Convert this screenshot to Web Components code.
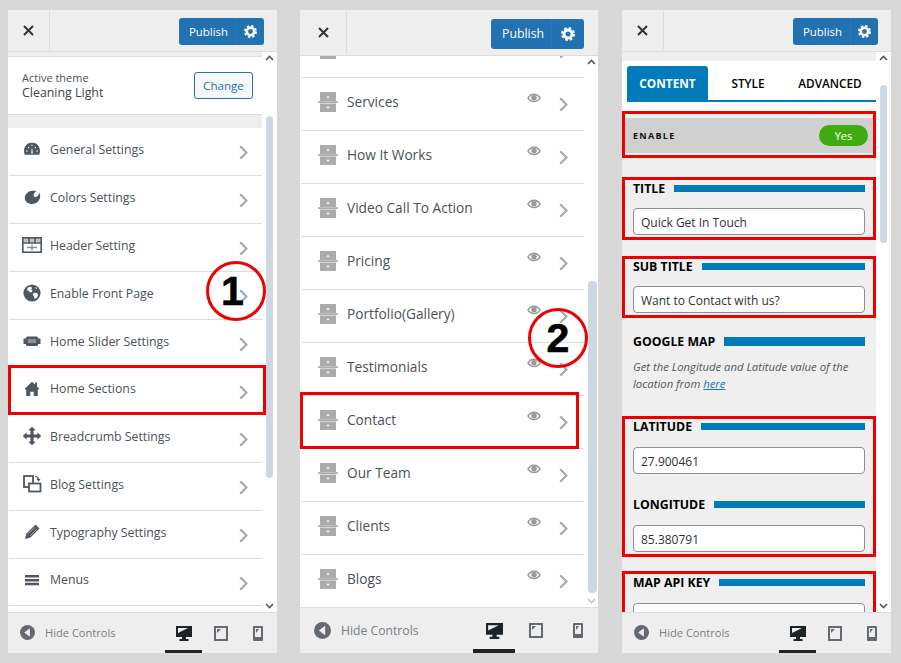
<!DOCTYPE html>
<html lang="en">
<head>
<meta charset="utf-8">
<title>Customizer steps</title>
<style>
    html, body { margin: 0; background: #d8d8d8; }
    body {
        width: 901px;
        height: 663px;
        box-sizing: border-box;
        padding: 10px 0 10px 8px;
        display: flex;
        gap: 23px;
        font-family: "Open Sans", "Noto Sans", sans-serif;
        overflow: hidden;
    }
    .form-top { height: 9px; background: #eeeeee; }
</style>
</head>
<body>
<cz-panel id="one">
    <cz-theme></cz-theme>
    <cz-row icon="gauge">General Settings</cz-row>
    <cz-row icon="palette">Colors Settings</cz-row>
    <cz-row icon="header">Header Setting</cz-row>
    <cz-row icon="globe">Enable Front Page</cz-row>
    <cz-row icon="slider">Home Slider Settings</cz-row>
    <cz-row icon="home" mark style="--row-h:47px;--mark:-3px -4px -1px -1px">Home Sections</cz-row>
    <cz-row icon="move">Breadcrumb Settings</cz-row>
    <cz-row icon="blog">Blog Settings</cz-row>
    <cz-row icon="pencil">Typography Settings</cz-row>
    <cz-row icon="menu" style="--row-h:47px">Menus</cz-row>
    <cz-callout slot="over" style="left:198px;top:251px;padding-right:7px">1</cz-callout>
</cz-panel>

<cz-panel id="two">
    <cz-row icon="section" eye style="margin-top:-31px"></cz-row>
    <cz-row icon="section" eye>Services</cz-row>
    <cz-row icon="section" eye>How It Works</cz-row>
    <cz-row icon="section" eye>Video Call To Action</cz-row>
    <cz-row icon="section" eye>Pricing</cz-row>
    <cz-row icon="section" eye>Portfolio(Gallery)</cz-row>
    <cz-row icon="section" eye>Testimonials</cz-row>
    <cz-row icon="section" eye mark style="--mark:-4px 5px -1px -1px">Contact</cz-row>
    <cz-row icon="section" eye>Our Team</cz-row>
    <cz-row icon="section" eye>Clients</cz-row>
    <cz-row icon="section" eye>Blogs</cz-row>
    <cz-callout slot="over" style="left:228px;top:298px">2</cz-callout>
</cz-panel>

<cz-panel id="three">
    <div class="form-top"></div>
    <cz-tabs></cz-tabs>
    <cz-form>
        <cz-box style="margin-top:9px"><cz-enable></cz-enable></cz-box>
        <cz-box style="margin-top:19px;--box-top:1px"><cz-field label="TITLE" value="Quick Get In Touch"></cz-field></cz-box>
        <cz-box style="margin-top:16px"><cz-field label="SUB TITLE" value="Want to Contact with us?"></cz-field></cz-box>
        <cz-note label="GOOGLE MAP">Get the Longitude and Latitude value of the<br>location from <a href="#">here</a></cz-note>
        <cz-box style="--gap:13px">
            <cz-field label="LATITUDE" value="27.900461"></cz-field>
            <cz-field label="LONGITUDE" value="85.380791" style="margin-top:23px"></cz-field>
        </cz-box>
        <cz-box style="margin-top:14px;--gap:13px;--box-top:1px"><cz-field label="MAP API KEY" value=""></cz-field></cz-box>
    </cz-form>
</cz-panel>

<script>
const ICONS = {
    gauge: '<path fill="#50575e" fill-rule="evenodd" d="M10 3.500C5.300 3.500 2 7.200 2 12c0 1.300.3 2.500.8 3.800h14.400c.5-1.300.8-2.500.8-3.800 0-4.800-3.300-8.500-8-8.500zM6 8h1.200v1.200H6zM9.400 5.800h1.200V7H9.400zM12.800 8H14v1.200h-1.200zM4.300 11.500h1.200v1.200H4.300zM14.500 11.500h1.200v1.200h-1.200zM9.200 14.500l.5-5h.6l.5 5z"/>',
    palette: '<path fill="#50575e" d="M14.500 4.200c-1.500 1-2.900 2.400-2.900 3.700 0 1.300 1 2.200 2.300 2 1.500-.2 2.900-1.900 3.500-4.200.6 1.200.9 2.500.8 3.600-.2 4.400-3.500 7.700-8 7.700-4 0-7.400-2.300-7.400-6 0-3.800 3.800-7.200 7.800-7.200 1.400 0 2.800.1 3.900.4z"/>',
    header: '<g fill="none" stroke="#50575e"><rect x=".8" y="2.800" width="18.400" height="14.400" stroke-width="1.600"/><path stroke-width="1.600" d="M1 8h18M7 3v5M13 3v5"/><path stroke="#8c8f94" stroke-width="1.300" d="M5 12.500h10M10 9.500v6"/></g><path fill="#50575e" d="M1 3h18v4.500H1z" opacity=".35"/>',
    globe: '<circle cx="10" cy="10" r="8.600" fill="#50575e"/><path fill="#fff" d="M5.600 4.800 8.500 3.600l1.600 1.300-1 1.700 1.400 1-.7 1.600-2 .1-1.100-1.500-1.700-.4zM11.800 9.800l3 .2 1.500 2-1.700 3-2 .9-.6-2.600-1.300-1.500zM13 3.800l2.200 1.500-1.200.8z"/>',
    slider: '<rect x="1.500" y="7.500" width="3" height="5.500" rx=".6" fill="#50575e"/><rect x="15.500" y="7.500" width="3" height="5.500" rx=".6" fill="#50575e"/><rect x="4" y="5.500" width="12" height="9.500" rx="1.500" fill="#50575e"/><rect x="6" y="8" width="8" height="4" fill="#8c8f94"/>',
    home: '<path fill="#50575e" d="M10 2.800 3 9.400v1h1.200v6.600h4.100v-4.200h3.400v4.200h4.100v-6.600H17v-1l-2-1.900V3.600h-2v1.900z"/>',
    move: '<path fill="#50575e" d="M10 .8 13.800 4.600H11.600V8.400H15.400V6.200L19.200 10 15.400 13.800V11.600H11.600V15.400H13.800L10 19.200 6.200 15.400H8.400V11.600H4.600V13.800L.8 10 4.600 6.200V8.400H8.400V4.600H6.200z"/>',
    blog: '<g fill="none" stroke="#50575e" stroke-width="1.800"><rect x="2" y="2" width="9" height="11"/><rect x="7" y="9.500" width="11.500" height="8" fill="#fff"/></g><path fill="none" stroke="#50575e" stroke-width="1.200" d="M13 2.500c2 0 3.500 1 3.500 3.500M15 4.800l1.500 1.800L18 4.800"/>',
    pencil: '<path fill="#50575e" d="M13.500 2.500 17.500 6.500 8.500 15.500 3 17 4.500 11.500z"/><path stroke="#c8cacc" stroke-width=".6" d="M6.200 11.800 12.800 5.200M8.200 13.800 14.800 7.200"/>',
    menu: '<path fill="#50575e" d="M3 5h14v2.500H3zM3 8.900h14v2.500H3zM3 12.800h14v2.500H3z"/>',
    section: '<path fill="#ababab" d="M2 0h16v8.900H2zM0 9.300h20v1.700H0zM2 11.400h16V20H2z"/><path fill="#fff" d="M10 3.800 11.700 5.800H8.300zM10 16.800 8.300 14.800h3.400z"/>'
};
const EYE = '<svg width="14" height="14" viewBox="0 0 20 20"><path fill="#9a9a9a" d="M10 3.500C5.500 3.500 2 6.500.2 10c1.800 3.500 5.300 6 9.800 6s8-2.500 9.800-6C18 6.500 14.500 3.500 10 3.500z"/><path fill="#fff" d="M10 6C6.800 6 4 7.800 2.600 10 4 12.300 6.800 14 10 14s6-1.700 7.400-4C16 7.800 13.200 6 10 6z"/><circle cx="10" cy="9.500" r="3.900" fill="#9a9a9a"/></svg>';
const CHEVRON = '<svg width="9" height="15" viewBox="0 0 9 15"><path d="M1.200 1.200 7.400 7.500 1.200 13.800" fill="none" stroke="#a7aaad" stroke-width="2.200"/></svg>';

class CzPanel extends HTMLElement {
    constructor() {
        super();
        this.attachShadow({ mode: 'open' });
    }

    connectedCallback() {
        const big = this.id === 'two';
        const track = { one: [64, 362, 7], two: [225, 312, 9], three: [33, 158, 7] }[this.id];
        this.shadowRoot.innerHTML = `
            <style>
                :host {
                    display: flex;
                    flex-direction: column;
                    position: relative;
                    flex: none;
                    height: 643px;
                    width: ${big ? 298 : 269}px;
                    margin-left: ${this.id === 'three' ? 1 : 0}px;
                    background: #fff;
                    color: #4a5158;
                    --row-h: ${big ? 53 : 48}px;
                    --row-font: ${big ? 13.7 : 12.3}px;
                    --row-pad: ${big ? 17 : 13}px;
                    --row-gap: ${big ? 9 : 8}px;
                    --row-right: ${big ? 16 : 14}px;
                    --chev: ${big ? 5 : 7}px;
                }
                .head {
                    flex: none;
                    height: ${big ? 45 : 41}px;
                    display: flex;
                    background: #eeeeee;
                    border-bottom: 1px solid #dcdcde;
                }
                .close {
                    width: ${big ? 46 : 41}px;
                    margin: 1px 0;
                    border-right: 1px solid #dcdcde;
                    display: flex;
                    align-items: center;
                    justify-content: center;
                }
                .publish {
                    margin: ${big ? 9 : 8}px ${big ? 14 : 13}px 0 auto;
                    height: ${big ? 30 : 27}px;
                    display: flex;
                    background: #2271b1;
                    border-radius: 3px;
                    color: #fff;
                    font-size: ${big ? 12.3 : 11.4}px;
                }
                .publish span {
                    width: ${big ? 61 : 58}px;
                    box-sizing: border-box;
                    padding-left: ${big ? 11 : 10}px;
                    line-height: ${big ? 30 : 27}px;
                    border-right: 1px solid #2a78b8;
                }
                .publish i {
                    width: ${big ? 32 : 27}px;
                    display: flex;
                    align-items: center;
                    justify-content: center;
                }
                .main {
                    flex: 1;
                    min-height: 0;
                    display: flex;
                    overflow: hidden;
                }
                .content {
                    flex: 1;
                    min-width: 0;
                    position: relative;
                    z-index: 1;
                }
                .track {
                    flex: none;
                    width: ${big ? 14 : 15}px;
                    position: relative;
                    box-sizing: border-box;
                    padding: ${track[0]}px 0 0 4px;
                }
                .thumb {
                    width: ${track[2]}px;
                    height: ${track[1]}px;
                    background: #cdd8e3;
                    border-radius: 4px;
                }
                .track svg { position: absolute; left: 3px; }
                .up { top: 3px; }
                .down { bottom: 3px; }
                .foot {
                    flex: none;
                    height: ${big ? 45 : 40}px;
                    display: flex;
                    align-items: center;
                    background: #eeeeee;
                    border-top: 1px solid #dcdcde;
                    font-size: ${big ? 12.2 : 11.1}px;
                    color: #787c82;
                }
                .hide { display: flex; align-items: center; gap: ${big ? 10 : 10}px; padding: 0 0 ${big ? 0 : 1}px ${big ? 14 : 12}px; }
                .devices {
                    margin: 0 ${big ? -1 : 1}px 0 auto;
                    height: 100%;
                    display: flex;
                }
                .devices div {
                    width: ${big ? 42 : 37}px;
                    display: flex;
                    align-items: center;
                    justify-content: center;
                }
                .devices .on { box-shadow: inset 0 -${big ? 4 : 3}px #1d2327; }
            </style>
            <div class="head">
                <div class="close">
                    <svg width="11" height="11" viewBox="0 0 11 11"><path d="M1 1l9 9M10 1l-9 9" stroke="#2c3338" stroke-width="2" fill="none"/></svg>
                </div>
                <div class="publish">
                    <span>Publish</span>
                    <i><svg width="${big ? 14 : 13}" height="${big ? 14 : 13}" viewBox="0 0 14 14"><circle cx="7" cy="7" r="4" fill="none" stroke="#fff" stroke-width="2.800"/><circle cx="7" cy="7" r="6" fill="none" stroke="#fff" stroke-width="2" stroke-dasharray="2.600 2.112"/></svg></i>
                </div>
            </div>
            <div class="main">
                <div class="content"><slot></slot></div>
                <div class="track">
                    <svg class="up" width="9" height="6" viewBox="0 0 9 6"><path d="M1 5 4.500 1.500 8 5" fill="none" stroke="#50575e" stroke-width="1.600"/></svg>
                    <div class="thumb"></div>
                    <svg class="down" width="9" height="6" viewBox="0 0 9 6"><path d="M1 1 4.500 4.500 8 1" fill="none" stroke="${big ? '#c3c4c7' : '#50575e'}" stroke-width="1.600"/></svg>
                </div>
            </div>
            <div class="foot">
                <div class="hide">
                    <svg width="${big ? 17 : 15}" height="${big ? 17 : 15}" viewBox="0 0 16 16"><circle cx="8" cy="8" r="8" fill="#646970"/><path d="M10.500 3.500v9L4.500 8z" fill="#eee"/></svg>
                    <span>Hide Controls</span>
                </div>
                <div class="devices">
                    <div class="on"><svg width="${big ? 17 : 16}" height="${big ? 16 : 15}" viewBox="0 0 16 15"><path fill="#1d2327" d="M0 0h16v11h-6v2h2.500v2h-9v-2H6v-2H0z"/><path fill="#eee" d="M2 2h10L2 7z"/></svg></div>
                    <div><svg width="14" height="15" viewBox="0 0 14 15"><rect x="1" y="1" width="12" height="13" fill="none" stroke="#646970" stroke-width="2"/><path fill="#646970" d="M3 3h4L3 7z"/></svg></div>
                    <div><svg width="10" height="15" viewBox="0 0 10 15"><rect width="10" height="15" rx="1" fill="#646970"/><path fill="#eee" d="M2 2h6v9H2z"/><path fill="#646970" d="M3 3h3L3 7z"/></svg></div>
                </div>
            </div>
            <slot name="over"></slot>
        `;
    }
}

class CzTheme extends HTMLElement {
    constructor() {
        super();
        this.attachShadow({ mode: 'open' });
        this.shadowRoot.innerHTML = `
            <style>
                :host { display: block; background: #eeeeee; padding-top: 4px; }
                .box {
                    display: flex;
                    align-items: center;
                    justify-content: space-between;
                    height: 57px;
                    background: #fff;
                    border-top: 1px solid #dcdcde;
                    border-bottom: 1px solid #dcdcde;
                    padding: 0 9px 0 14px;
                }
                small { display: block; font-size: 11px; line-height: 15px; margin-top: -1px; }
                b { display: block; font-weight: 500; font-size: 12.4px; line-height: 16px; color: #3c434a; }
                .change {
                    width: 59px;
                    height: 27px;
                    box-sizing: border-box;
                    border: 1px solid #2271b1;
                    border-radius: 3px;
                    background: #f6f7f7;
                    color: #2271b1;
                    font-size: 11.6px;
                    line-height: 26px;
                    text-align: center;
                    margin-top: -1px;
                }
                .gap { height: 13px; }
            </style>
            <div class="box">
                <div><small>Active theme</small><b>Cleaning Light</b></div>
                <div class="change">Change</div>
            </div>
            <div class="gap"></div>
        `;
    }
}

class CzRow extends HTMLElement {
    constructor() {
        super();
        this.attachShadow({ mode: 'open' });
    }

    connectedCallback() {
        const icon = ICONS[this.getAttribute('icon')];
        const eye = this.hasAttribute('eye');
        this.shadowRoot.innerHTML = `
            <style>
                :host {
                    display: block;
                    position: relative;
                    box-sizing: border-box;
                    height: var(--row-h);
                    margin-left: 1px;
                    border-bottom: 1px solid #dcdcde;
                    font-size: var(--row-font);
                }
                .row {
                    height: 100%;
                    box-sizing: border-box;
                    display: flex;
                    align-items: center;
                    gap: var(--row-gap);
                    padding: 0 var(--row-right) 5px var(--row-pad);
                }
                .icon { flex: none; display: block; }
                .label { flex: 1; white-space: nowrap; }
                .eye { flex: none; margin: -8px 9px 0 0; display: flex; }
                .chev { flex: none; display: flex; margin-top: var(--chev); }
                .mark {
                    position: absolute;
                    inset: var(--mark);
                    border: 3px solid #ee0000;
                    pointer-events: none;
                }
            </style>
            <div class="row">
                <svg class="icon" width="20" height="20" viewBox="0 0 20 20">${icon}</svg>
                <span class="label"><slot></slot></span>
                ${eye ? `<span class="eye">${EYE}</span>` : ''}
                <span class="chev">${CHEVRON}</span>
            </div>
            ${this.hasAttribute('mark') ? '<div class="mark"></div>' : ''}
        `;
    }
}

class CzCallout extends HTMLElement {
    constructor() {
        super();
        this.attachShadow({ mode: 'open' });
        this.shadowRoot.innerHTML = `
            <style>
                :host {
                    position: absolute;
                    z-index: 3;
                    width: 60px;
                    height: 60px;
                    box-sizing: border-box;
                    border: 3px solid #ee0000;
                    border-radius: 50%;
                    display: flex;
                    align-items: center;
                    justify-content: center;
                    font-family: "Liberation Sans", Arial, sans-serif;
                    font-weight: 700;
                    font-size: 41px;
                    color: #000;
                    -webkit-text-stroke: .6px #000;
                }
            </style>
            <slot></slot>
        `;
    }
}

class CzTabs extends HTMLElement {
    constructor() {
        super();
        this.attachShadow({ mode: 'open' });
        this.shadowRoot.innerHTML = `
            <style>
                :host {
                    display: flex;
                    box-sizing: border-box;
                    height: 41px;
                    padding: 5px 0 0 5px;
                    background: #fff;
                    font-size: 11.8px;
                    font-weight: 600;
                    color: #000;
                    text-align: center;
                    line-height: 35px;
                }
                .wrap { flex: 1; display: flex; border-bottom: 2px solid #007ab8; }
                div div { width: 80px; }
                .on { width: 81px; background: #007ab8; color: #fff; border-radius: 3px 3px 0 0; font-weight: 700; }
                .adv { flex: 1; padding-right: 4px; }
            </style>
            <div class="wrap">
                <div class="on">CONTENT</div>
                <div>STYLE</div>
                <div class="adv">ADVANCED</div>
            </div>
        `;
    }
}

class CzForm extends HTMLElement {
    constructor() {
        super();
        this.attachShadow({ mode: 'open' });
        this.shadowRoot.innerHTML = `
            <style>
                :host { display: block; background: #efefef; height: 600px; }
            </style>
            <slot></slot>
        `;
    }
}

class CzBox extends HTMLElement {
    constructor() {
        super();
        this.attachShadow({ mode: 'open' });
        this.shadowRoot.innerHTML = `
            <style>
                :host {
                    display: block;
                    box-sizing: border-box;
                    border: 3px solid #ee0000;
                    padding: var(--box-top, 0) 8px 2px;
                }
            </style>
            <slot></slot>
        `;
    }
}

class CzEnable extends HTMLElement {
    constructor() {
        super();
        this.attachShadow({ mode: 'open' });
        this.shadowRoot.innerHTML = `
            <style>
                :host {
                    display: flex;
                    align-items: center;
                    justify-content: space-between;
                    height: 35px;
                    margin: 4px -8px 0;
                    padding: 0 5px 0 8px;
                    background: #d0d0d0;
                    color: #111;
                    font-size: 9px;
                    font-weight: 700;
                    letter-spacing: 1.3px;
                }
                .yes {
                    width: 49px;
                    height: 21px;
                    border-radius: 11px;
                    background: #3fab10;
                    color: #fff;
                    font-size: 11px;
                    font-weight: 400;
                    letter-spacing: 0;
                    line-height: 21px;
                    text-align: center;
                }
            </style>
            <span>ENABLE</span>
            <span class="yes">Yes</span>
        `;
    }
}

class CzHeading extends HTMLElement {
    constructor() {
        super();
        this.attachShadow({ mode: 'open' });
        this.shadowRoot.innerHTML = `
            <style>
                :host {
                    display: flex;
                    align-items: center;
                    gap: 9px;
                    height: 15px;
                    color: #000;
                    font-size: 12.3px;
                    font-weight: 700;
                    white-space: nowrap;
                }
                i { flex: 1; height: var(--bar, 7px); background: #007ab8; }
            </style>
            <slot></slot><i></i>
        `;
    }
}

class CzField extends HTMLElement {
    constructor() {
        super();
        this.attachShadow({ mode: 'open' });
    }

    connectedCallback() {
        this.shadowRoot.innerHTML = `
            <style>
                :host { display: block; }
                .input {
                    box-sizing: border-box;
                    height: 27px;
                    margin-top: var(--gap, 12px);
                    padding: 0 7px;
                    background: #fff;
                    border: 1px solid #8c8f94;
                    border-radius: 4px;
                    color: #2c3338;
                    font-size: 12px;
                    line-height: 27px;
                }
            </style>
            <cz-heading>${this.getAttribute('label')}</cz-heading>
            <div class="input">${this.getAttribute('value')}</div>
        `;
    }
}

class CzNote extends HTMLElement {
    constructor() {
        super();
        this.attachShadow({ mode: 'open' });
    }

    connectedCallback() {
        this.shadowRoot.innerHTML = `
            <style>
                :host {
                    display: block;
                    box-sizing: border-box;
                    height: 98px;
                    padding: 16px 11px 0;
                }
                cz-heading { --bar: 9px; }
                p {
                    margin: 9px 0 0;
                    font-size: 11.3px;
                    font-style: italic;
                    line-height: 17px;
                    color: #50575e;
                }
                ::slotted(a) { color: #2271b1; }
            </style>
            <cz-heading>${this.getAttribute('label')}</cz-heading>
            <p><slot></slot></p>
        `;
    }
}

customElements.define('cz-panel', CzPanel);
customElements.define('cz-theme', CzTheme);
customElements.define('cz-row', CzRow);
customElements.define('cz-callout', CzCallout);
customElements.define('cz-tabs', CzTabs);
customElements.define('cz-form', CzForm);
customElements.define('cz-box', CzBox);
customElements.define('cz-enable', CzEnable);
customElements.define('cz-heading', CzHeading);
customElements.define('cz-field', CzField);
customElements.define('cz-note', CzNote);
</script>
</body>
</html>
